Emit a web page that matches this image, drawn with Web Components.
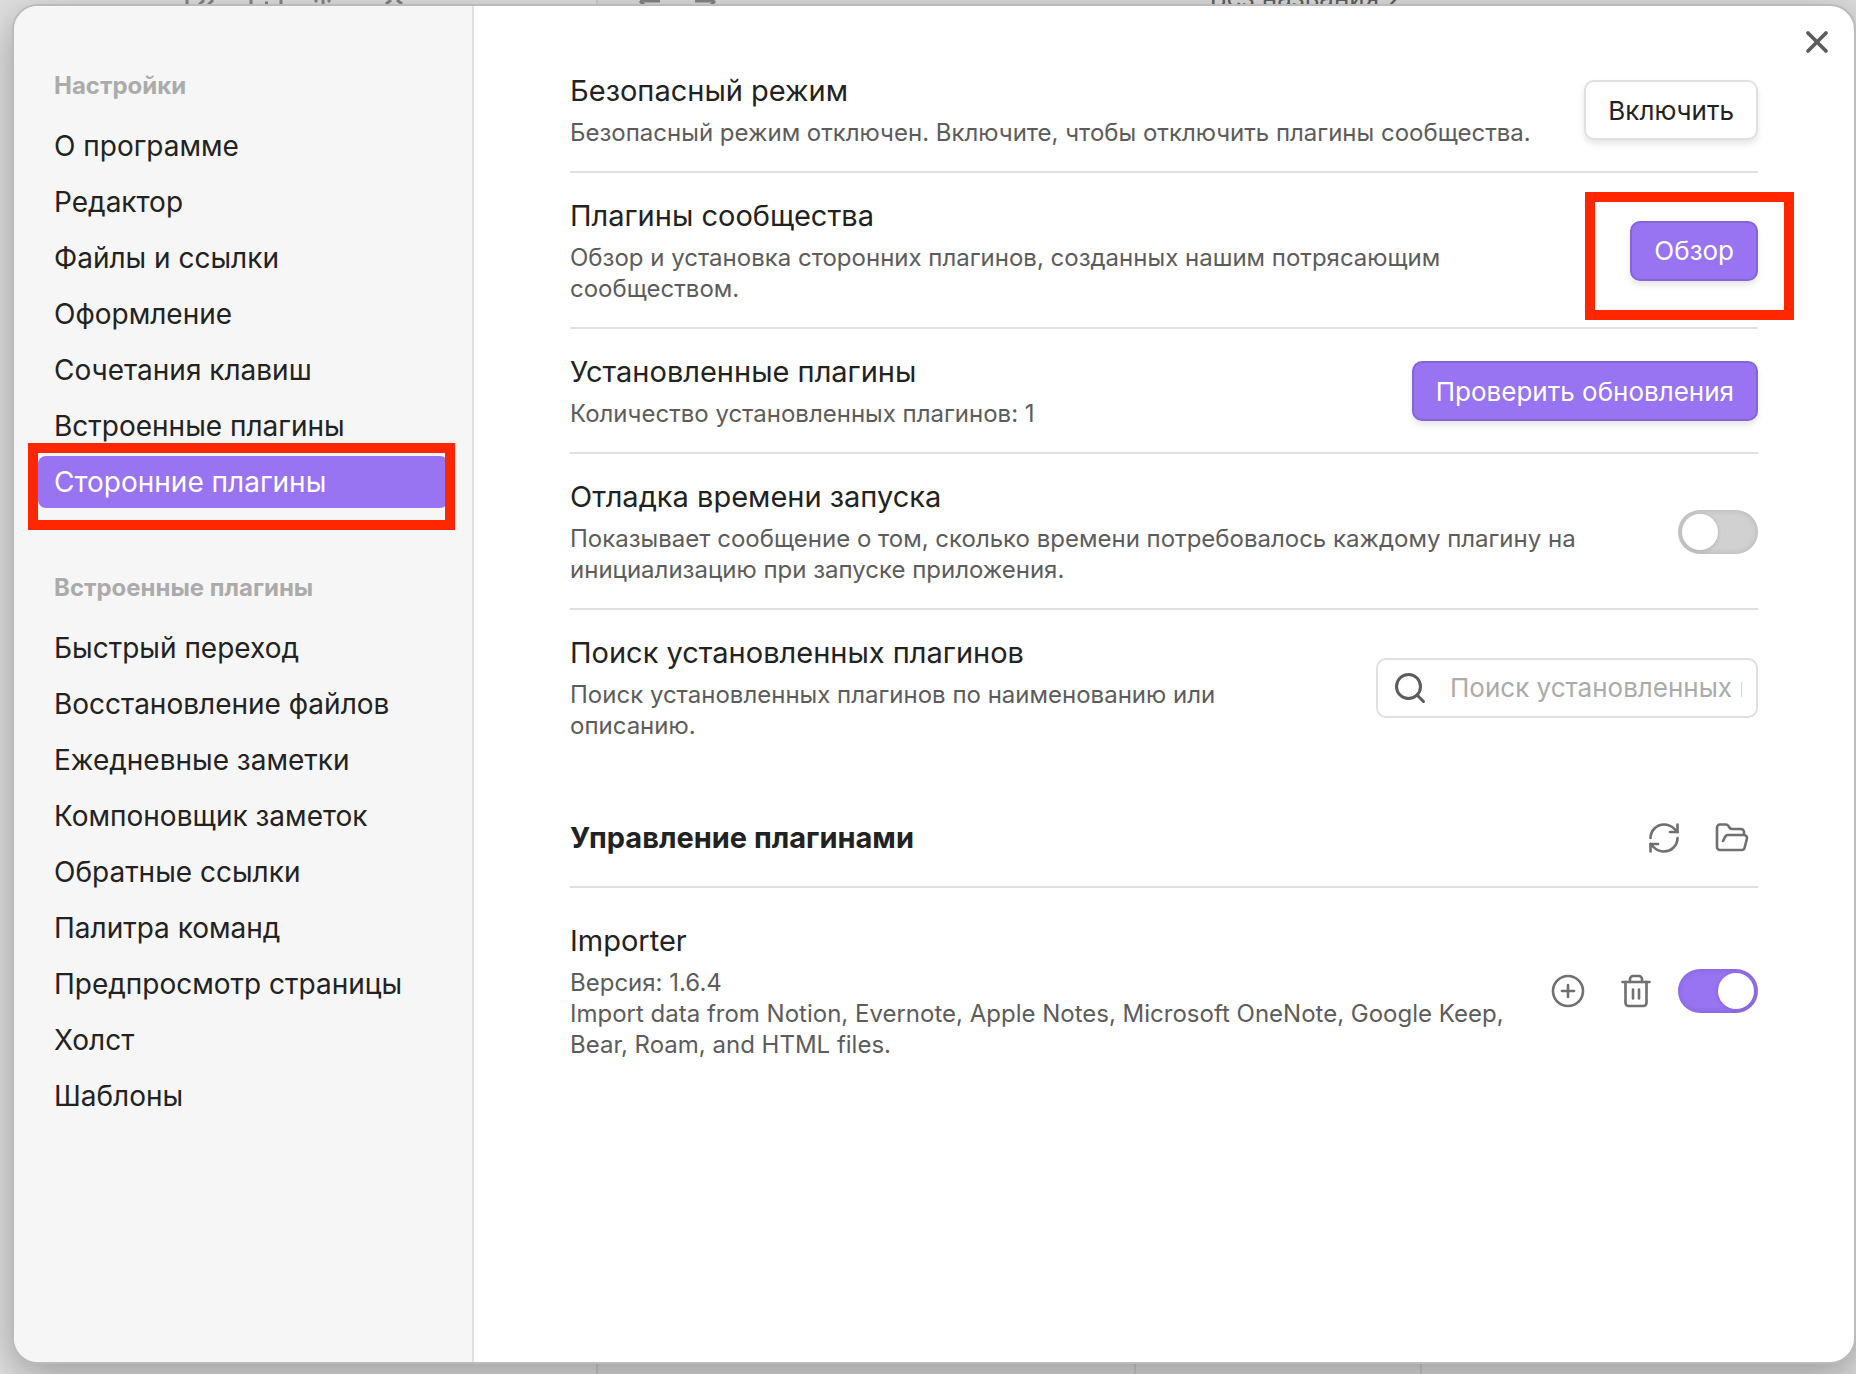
<!DOCTYPE html>
<html lang="ru">
<head>
<meta charset="utf-8">
<title>Настройки</title>
<style>
html, body {
    margin: 0;
    height: 100%;
}

body {
    overflow: hidden;
    font-family: Inter, "Liberation Sans", sans-serif;
    color: #222222;
    background-color: #dcdcdc;
}
</style>
</head>
<body>

<settings-app></settings-app>

<script>
//! ICONS
const icons = {
    close: '<path d="M18 6 6 18"/><path d="m6 6 12 12"/>',
    search: '<circle cx="11" cy="11" r="8"/><path d="m21 21-4.3-4.3"/>',
    refresh: '<path d="M3 12a9 9 0 0 1 9-9 9.75 9.75 0 0 1 6.74 2.74L21 8"/><path d="M21 3v5h-5"/><path d="M21 12a9 9 0 0 1-9 9 9.75 9.75 0 0 1-6.74-2.74L3 16"/><path d="M8 16H3v5"/>',
    folder: '<path d="m6 14 1.5-2.9A2 2 0 0 1 9.24 10H20a2 2 0 0 1 1.94 2.5l-1.54 6a2 2 0 0 1-1.95 1.5H4a2 2 0 0 1-2-2V5a2 2 0 0 1 2-2h3.9a2 2 0 0 1 1.69.9l.81 1.2a2 2 0 0 0 1.67.9H18a2 2 0 0 1 2 2v2"/>',
    plus: '<circle cx="12" cy="12" r="10"/><path d="M8 12h8"/><path d="M12 8v8"/>',
    trash: '<path d="M3 6h18"/><path d="M19 6v14c0 1-1 2-2 2H7c-1 0-2-1-2-2V6"/><path d="M8 6V4c0-1 1-2 2-2h4c1 0 2 1 2 2v2"/><path d="M10 11v6"/><path d="M14 11v6"/>'
}

function defineElement(name, html, setup) {
    const template = document.createElement('template')
    template.innerHTML = html

    customElements.define(name, class extends HTMLElement {
        constructor() {
            super();
            this.attachShadow({ mode: 'open' });
            this.shadowRoot.appendChild(template.content.cloneNode(true));
        }

        connectedCallback() {
            if (setup) setup(this, this.shadowRoot)
        }
    })
}

//! ICON
defineElement('ui-icon', `
<style>
:host {
    display: block;
    width: 36px;
    height: 36px;
}

svg {
    display: block;
    width: 100%;
    height: 100%;
    fill: none;
    stroke: currentColor;
    stroke-width: var(--icon-stroke, 1.75);
    stroke-linecap: round;
    stroke-linejoin: round;
}
</style>
<svg viewBox="0 0 24 24" aria-hidden="true"></svg>
`, (host, root) => {
    root.querySelector('svg').innerHTML = icons[host.getAttribute('name')]
})

//! ICON BUTTON
defineElement('icon-button', `
<style>
:host {
    display: block;
    color: #707070;
}

button {
    display: grid;
    place-items: center;
    width: 52px;
    height: 52px;
    padding: 0;
    border: 0;
    background: none;
    color: inherit;
}
</style>
<button type="button"><ui-icon></ui-icon></button>
`, (host, root) => {
    root.querySelector('button').setAttribute('aria-label', host.getAttribute('label'))
    root.querySelector('ui-icon').shadowRoot.querySelector('svg').innerHTML = icons[host.getAttribute('icon')]
})

//! BUTTON
defineElement('ui-button', `
<style>
:host {
    display: block;
}

button {
    display: block;
    height: 60px;
    padding: 0 22px;
    border: 2px solid #e0e0e0;
    border-radius: 10px;
    background-color: white;
    box-shadow: 0 4px 6px rgba(0, 0, 0, 0.1);
    color: inherit;
    font-family: inherit;
    font-size: 26px;
    white-space: nowrap;
}

:host([primary]) button {
    border-color: #8565d6;
    background-color: #9873f2;
    color: white;
}
</style>
<button type="button"><slot></slot></button>
`)

//! TOGGLE
defineElement('ui-toggle', `
<style>
:host {
    display: block;
}

input {
    appearance: none;
    display: block;
    box-sizing: border-box;
    width: 80px;
    height: 44px;
    margin: 0;
    padding: 4px;
    border-radius: 22px;
    background-color: #d1d1d1;
    box-shadow: inset 0 0 6px rgba(0, 0, 0, 0.15);
}

/* Knob */
input::before {
    content: "";
    display: block;
    width: 36px;
    height: 36px;
    border-radius: 50%;
    background-color: white;
    box-shadow: 0 1px 4px rgba(0, 0, 0, 0.15);
}

input:checked {
    background-color: #9873f2;
}

input:checked::before {
    margin-left: auto;
}
</style>
<input type="checkbox" role="switch">
`, (host, root) => {
    const input = root.querySelector('input')
    input.checked = host.hasAttribute('checked')
    input.setAttribute('aria-label', host.getAttribute('label'))
})

//! SEARCH BOX
defineElement('search-box', `
<style>
:host {
    display: block;
}

label {
    display: flex;
    align-items: center;
    gap: 22px;
    box-sizing: border-box;
    width: 382px;
    height: 60px;
    padding: 0 14px;
    border: 2px solid #e0e0e0;
    border-radius: 10px;
    background-color: white;
    color: #5c5c5c;
}

ui-icon {
    flex: none;
    --icon-stroke: 2;
}

input {
    flex: 1;
    min-width: 0;
    padding: 0;
    border: 0;
    outline: 0;
    background: none;
    font-family: inherit;
    font-size: 26px;
}

input::placeholder {
    color: #ababab;
}
</style>
<label><ui-icon name="search"></ui-icon><input type="text"></label>
`, (host, root) => {
    const input = root.querySelector('input')
    input.placeholder = host.getAttribute('placeholder')
    input.setAttribute('aria-label', host.getAttribute('placeholder'))
})

//! RED FRAME drawn over whatever it wraps
defineElement('red-frame', `
<style>
:host {
    display: block;
    position: relative;
}

div {
    position: absolute;
    inset: var(--frame-inset);
    border: 10px solid #ff2600;
    pointer-events: none;
}
</style>
<slot></slot>
<div></div>
`)

//! SIDEBAR
defineElement('nav-group', `
<style>
:host {
    display: block;
}

h2 {
    margin: 0 0 8px;
    padding: 10px 16px;
    font-size: 24px;
    font-weight: 700;
    line-height: 32px;
    color: #ababab;
}

nav {
    display: grid;
    gap: 4px;
}
</style>
<h2></h2>
<nav><slot></slot></nav>
`, (host, root) => {
    root.querySelector('h2').textContent = host.getAttribute('heading')
})

defineElement('nav-item', `
<style>
:host {
    display: block;
}

a {
    display: block;
    padding: 8px 16px;
    border-radius: 8px;
    color: inherit;
    font-size: 28px;
    line-height: 36px;
    text-decoration: none;
    white-space: nowrap;
}

:host([active]) a {
    background-color: #9873f2;
    color: white;
}
</style>
<a href="#"><slot></slot></a>
`)

//! SETTING ROW
defineElement('setting-row', `
<style>
:host {
    display: flex;
    align-items: center;
    gap: 36px;
    padding: 24px 0 23px;
    border-bottom: 2px solid #e0e0e0;
}

:host([last]) {
    border-bottom: 0;
}

.info {
    flex: 1;
    min-width: 0;
}

h3 {
    margin: 0 0 7px;
    font-size: 29px;
    font-weight: 400;
    line-height: 38px;
}

p {
    margin: 0;
    font-size: 24px;
    line-height: 31px;
    color: #5c5c5c;
}

.control {
    display: flex;
    align-items: center;
    gap: 16px;
}
</style>
<div class="info">
    <h3><slot name="name"></slot></h3>
    <p><slot name="description"></slot></p>
</div>
<div class="control"><slot></slot></div>
`)

defineElement('section-heading', `
<style>
:host {
    display: flex;
    align-items: center;
    justify-content: space-between;
    margin-top: 26px;
    padding: 22px 0;
    border-bottom: 2px solid #e0e0e0;
}

h2 {
    margin: 0;
    font-size: 29px;
    font-weight: 700;
    line-height: 38px;
}

.control {
    display: flex;
    gap: 16px;
}
</style>
<h2><slot></slot></h2>
<div class="control"><slot name="control"></slot></div>
`)

//! APP WINDOW behind the modal
defineElement('app-backdrop', `
<style>
:host {
    display: grid;
    grid-template-columns: 598px 1fr;
    color: #5f5f5f;
}

.side {
    border-right: 2px solid #cccccc;
    background-color: #dfdfdf;
}

svg {
    display: block;
    height: 6px;
    fill: none;
    stroke: #858585;
    stroke-width: 3;
}

.main {
    display: grid;
    grid-template-columns: 538px 286px 1fr;
    grid-template-rows: auto 1fr;
    align-items: end;
}

.title {
    grid-column: 1 / -1;
    display: grid;
    grid-template-columns: 158px 1fr;
    height: 6px;
    font-size: 26px;
    line-height: 32px;
    text-align: center;
}

.title span {
    margin-top: -18px;
}

.cell {
    height: 14px;
    border-right: 2px solid #cccccc;
}

.cell:last-child {
    border: 0;
}
</style>
<div class="side">
    <!-- Bottom edge of the toolbar icons -->
    <svg width="596" viewBox="0 0 596 6" aria-hidden="true">
        <path d="M187 0v6M204 0l-5 5M213 0l-5 5M251 0v6M281 0v6M265 3h3M323 0v6M317 0l-2 2M328 0l2 2M391 0l-5 4M397 0l5 4"/>
    </svg>
</div>
<div class="main">
    <div class="title">
        <svg width="158" viewBox="0 0 158 6" aria-hidden="true">
            <path d="M42 1h20M42 1l4 4M97 1h20M117 1l-4 4"/>
        </svg>
        <span>Без названия 2</span>
    </div>
    <div class="cell"></div>
    <div class="cell"></div>
    <div class="cell"></div>
</div>
`)

//! MODAL
defineElement('settings-modal', `
<style>
:host {
    display: grid;
    grid-template-columns: 460px 1fr;
    position: relative;
    overflow: hidden;
    border: 2px solid #bbbbbb;
    border-radius: 26px;
    background-color: white;
    box-shadow: 0 12px 40px rgba(0, 0, 0, 0.3);
}

aside {
    display: grid;
    align-content: start;
    gap: 54px;
    padding: 54px 24px 0;
    border-right: 2px solid #e0e0e0;
    background-color: #f6f6f6;
}

main {
    padding: 42px 96px 0;
}

.close {
    position: absolute;
    top: 10px;
    right: 11px;
    color: #5c5c5c;
    --icon-stroke: 2.5;
}
</style>
<aside><slot name="nav"></slot></aside>
<main><slot></slot></main>
<icon-button class="close" icon="close" label="Закрыть"></icon-button>
`)

//! PAGE
defineElement('settings-app', `
<style>
:host {
    display: grid;
    height: 100%;
}

app-backdrop, settings-modal {
    grid-area: 1 / 1;
}

settings-modal {
    margin: 4px 0 10px 12px;
}

.frame-nav {
    --frame-inset: -13px -7px -22px -10px;
}

.frame-button {
    --frame-inset: -29px -36px -39px -45px;
}

.plugin {
    padding-top: 34px;
}
</style>
<app-backdrop></app-backdrop>
<settings-modal>
    <nav-group slot="nav" heading="Настройки">
        <nav-item>О программе</nav-item>
        <nav-item>Редактор</nav-item>
        <nav-item>Файлы и ссылки</nav-item>
        <nav-item>Оформление</nav-item>
        <nav-item>Сочетания клавиш</nav-item>
        <nav-item>Встроенные плагины</nav-item>
        <red-frame class="frame-nav"><nav-item active>Сторонние плагины</nav-item></red-frame>
    </nav-group>
    <nav-group slot="nav" heading="Встроенные плагины">
        <nav-item>Быстрый переход</nav-item>
        <nav-item>Восстановление файлов</nav-item>
        <nav-item>Ежедневные заметки</nav-item>
        <nav-item>Компоновщик заметок</nav-item>
        <nav-item>Обратные ссылки</nav-item>
        <nav-item>Палитра команд</nav-item>
        <nav-item>Предпросмотр страницы</nav-item>
        <nav-item>Холст</nav-item>
        <nav-item>Шаблоны</nav-item>
    </nav-group>

    <setting-row>
        <span slot="name">Безопасный режим</span>
        <span slot="description">Безопасный режим отключен. Включите, чтобы отключить плагины сообщества.</span>
        <ui-button>Включить</ui-button>
    </setting-row>
    <setting-row>
        <span slot="name">Плагины сообщества</span>
        <span slot="description">Обзор и установка сторонних плагинов, созданных нашим потрясающим сообществом.</span>
        <red-frame class="frame-button"><ui-button primary>Обзор</ui-button></red-frame>
    </setting-row>
    <setting-row>
        <span slot="name">Установленные плагины</span>
        <span slot="description">Количество установленных плагинов: 1</span>
        <ui-button primary>Проверить обновления</ui-button>
    </setting-row>
    <setting-row>
        <span slot="name">Отладка времени запуска</span>
        <span slot="description">Показывает сообщение о том, сколько времени потребовалось каждому плагину на инициализацию при запуске приложения.</span>
        <ui-toggle label="Отладка времени запуска"></ui-toggle>
    </setting-row>
    <setting-row last>
        <span slot="name">Поиск установленных плагинов</span>
        <span slot="description">Поиск установленных плагинов по наименованию или описанию.</span>
        <search-box placeholder="Поиск установленных плагинов"></search-box>
    </setting-row>

    <section-heading>
        Управление плагинами
        <icon-button slot="control" icon="refresh" label="Обновить список"></icon-button>
        <icon-button slot="control" icon="folder" label="Открыть папку плагинов"></icon-button>
    </section-heading>

    <setting-row last class="plugin">
        <span slot="name">Importer</span>
        <span slot="description">Версия: 1.6.4<br>Import data from Notion, Evernote, Apple Notes, Microsoft OneNote, Google Keep, Bear, Roam, and HTML files.</span>
        <icon-button icon="plus" label="Горячие клавиши"></icon-button>
        <icon-button icon="trash" label="Удалить"></icon-button>
        <ui-toggle checked label="Importer"></ui-toggle>
    </setting-row>
</settings-modal>
`)
</script>
</body>
</html>
